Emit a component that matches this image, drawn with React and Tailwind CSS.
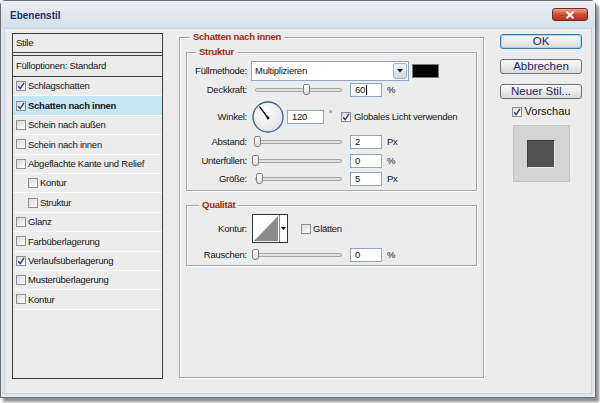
import React from "react"

const rows = [
    { label: "Schlagschatten", checked: true },
    { label: "Schatten nach innen", checked: true, selected: true },
    { label: "Schein nach außen" },
    { label: "Schein nach innen" },
    { label: "Abgeflachte Kante und Relief" },
    { label: "Kontur", indent: true },
    { label: "Struktur", indent: true },
    { label: "Glanz" },
    { label: "Farbüberlagerung" },
    { label: "Verlaufsüberlagerung", checked: true },
    { label: "Musterüberlagerung" },
    { label: "Kontur" },
]

function Check({ checked }) {
    return (
        <span className="flex h-[10px] w-[10px] shrink-0 items-center justify-center border border-[#8c8e90] bg-gradient-to-br from-[#d8d8d8] to-white">
            {checked && (
                <svg width="8" height="8" viewBox="0 0 8 8">
                    <path d="M1.2 4.2 L3.2 6.6 L7 0.8" fill="none" stroke="#23399a" strokeWidth="1.4" />
                </svg>
            )}
        </span>
    )
}

function Slider({ pos }) {
    return (
        <div className="relative ml-[5px] flex h-[12px] w-[90px] items-center">
            <div className="ml-[3px] h-[4px] flex-1 rounded-[2px] border border-[#a4a4a4] bg-[#e2e2e2]" />
            <div
                className="absolute top-0 h-[11px] w-[7px] rounded-t-[2px] rounded-b-[3px] border border-[#7f7f7f] bg-gradient-to-b from-white to-[#dcdcdc]"
                style={{ left: pos }}
            />
        </div>
    )
}

function NumField({ value, caret, className = "ml-[8px] w-[32px]" }) {
    return (
        <div className={`${className} flex h-[14px] items-center border border-[#8ea6c3] bg-white pl-[4px] text-[#111]`}>
            {value}
            {caret && <span className="ml-[1px] h-[10px] w-px bg-black" />}
        </div>
    )
}

function Label({ children }) {
    return <span className="w-[60px] shrink-0 text-right">{children}</span>
}

function SliderRow({ label, pos, value, unit, caret, className }) {
    return (
        <div className={`${className} flex h-[14px] items-center`}>
            <Label>{label}</Label>
            <Slider pos={pos} />
            <NumField value={value} caret={caret} />
            <span className="ml-[5px]">{unit}</span>
        </div>
    )
}

function GroupTitle({ children, className }) {
    return (
        <span className={`${className} -mt-[7px] block h-[12px] w-fit bg-[#ececec] px-[3px] font-bold leading-[12px] text-[#a3280e]`}>
            {children}
        </span>
    )
}

function Button({ children, primary }) {
    return (
        <button
            className={`flex h-[15px] w-[82px] items-center justify-center rounded-[3px] border bg-gradient-to-b from-[#f7f7f7] via-[#ececec] to-[#d9d9d9] text-[11.5px] leading-none tracking-normal text-[#1d1f6b] ${
                primary ? "border-[#3d7bad] shadow-[inset_0_0_0_1px_#9fd5f1]" : "border-[#707070]"
            }`}
        >
            {children}
        </button>
    )
}

export default function App() {
    return (
        <div className="h-[403px] w-[600px] bg-white font-['Liberation_Sans',Arial,sans-serif] text-[9.5px] leading-none tracking-[-0.25px] text-[#141414]">
            <div className="flex h-[398px] w-[596px] flex-col rounded-t-[5px] border border-[#6a6e74] bg-[#dfe7f0] shadow-[3px_4px_3px_rgba(0,0,0,0.45)]">
                {/* title bar */}
                <div className="flex h-[27px] shrink-0 items-start justify-between bg-gradient-to-b from-[#e9eff6] via-[#dfe8f2] to-[#d3dfeb]">
                    <span className="ml-[9px] mt-[10px] text-[10px] font-bold tracking-normal text-[#1b2f6b]">Ebenenstil</span>
                    <div className="mr-[7px] mt-[7px] flex h-[13px] w-[36px] items-center justify-center rounded-[3px] border border-[#7a2a20] bg-gradient-to-b from-[#e8a595] via-[#cf4a33] to-[#b8321f]">
                        <svg width="10" height="8" viewBox="0 0 10 8">
                            <path d="M1.5 0.8 L8.5 7.2 M8.5 0.8 L1.5 7.2" stroke="white" strokeWidth="2" />
                        </svg>
                    </div>
                </div>

                {/* body */}
                <div className="mx-[3px] mb-[3px] flex flex-1 items-start border border-[#c6d2de] bg-[#ececec] pl-[7px] pt-[4px]">
                    {/* style list */}
                    <div className="flex h-[346px] w-[151px] shrink-0 flex-col border border-[#3d3d3d]">
                        <div className="flex h-[19px] items-center border-b border-[#3d3d3d] pl-[3px]">Stile</div>
                        <div className="mt-[2px] flex h-[22px] items-center border-y border-[#3d3d3d] pl-[3px]">Fülloptionen: Standard</div>
                        {rows.map((r, i) => (
                            <div
                                key={i}
                                className={`flex h-[19.4px] items-center gap-[2px] border-b border-[#fbfbfb] ${
                                    r.indent ? "pl-[15px]" : "pl-[3px]"
                                } ${r.selected ? "bg-[#c7e6f5] font-bold" : ""}`}
                            >
                                <Check checked={r.checked} />
                                <span>{r.label}</span>
                            </div>
                        ))}
                    </div>

                    {/* main group */}
                    <div className="ml-[16px] mt-[4px] h-[341px] w-[305px] shrink-0 border border-[#a8a8a8] shadow-[inset_1px_1px_0_#fff,1px_1px_0_#fff]">
                        <GroupTitle className="ml-[10px]">Schatten nach innen</GroupTitle>

                        <div className="mx-[6px] mt-[9px] border border-[#a8a8a8] pb-[4px] shadow-[inset_1px_1px_0_#fff,1px_1px_0_#fff]">
                            <GroupTitle className="ml-[9px]">Struktur</GroupTitle>

                            <div className="mt-[3px] flex h-[20px] items-center">
                                <Label>Füllmethode:</Label>
                                <div className="ml-[4px] flex h-[20px] w-[158px] items-center border border-[#8ea6c3] bg-white pl-[3px]">
                                    <span className="flex-1">Multiplizieren</span>
                                    <div className="mr-px flex h-[16px] w-[14px] items-center justify-center rounded-[2px] border border-[#a5b4c6] bg-gradient-to-b from-[#f2f5f9] to-[#cfd8e2]">
                                        <svg width="6" height="4" viewBox="0 0 6 4">
                                            <path d="M0 0 H6 L3 3.5 Z" fill="#1a1a1a" />
                                        </svg>
                                    </div>
                                </div>
                                <div className="ml-[3px] h-[14px] w-[27px] border border-[#7c7c7c] bg-black" />
                            </div>

                            <SliderRow className="mt-[2px]" label="Deckkraft:" pos={51} value="60" unit="%" caret />

                            <div className="mt-[4px] flex h-[32px] items-center">
                                <Label>Winkel:</Label>
                                <svg className="ml-[5px] shrink-0" width="32" height="32" viewBox="0 0 32 32">
                                    <defs>
                                        <radialGradient id="dial" cx="40%" cy="35%" r="70%">
                                            <stop offset="0%" stopColor="#ffffff" />
                                            <stop offset="100%" stopColor="#e2e2e2" />
                                        </radialGradient>
                                    </defs>
                                    <circle cx="16" cy="16" r="15" fill="url(#dial)" stroke="#3f5f8f" strokeWidth="1.3" />
                                    <path d="M16 17 L7.5 5.5" stroke="#111" strokeWidth="1.3" />
                                    <circle cx="16" cy="17" r="1.4" fill="#111" />
                                </svg>
                                <NumField value="120" className="ml-[3px] w-[37px]" />
                                <span className="ml-[5px] self-start pt-[9px] text-[8px]">°</span>
                                <div className="ml-[9px] flex items-center gap-[3px]">
                                    <Check checked />
                                    <span>Globales Licht verwenden</span>
                                </div>
                            </div>

                            <SliderRow className="mt-[2px]" label="Abstand:" pos={2} value="2" unit="Px" />
                            <SliderRow className="mt-[5px]" label="Unterfüllen:" pos={0} value="0" unit="%" />
                            <SliderRow className="mt-[4px]" label="Größe:" pos={4} value="5" unit="Px" />
                        </div>

                        <div className="mx-[6px] mt-[14px] border border-[#a8a8a8] pb-[3px] shadow-[inset_1px_1px_0_#fff,1px_1px_0_#fff]">
                            <GroupTitle className="ml-[12px]">Qualität</GroupTitle>

                            <div className="mt-[3px] flex h-[29px] items-center">
                                <Label>Kontur:</Label>
                                <div className="ml-[5px] flex h-[29px] w-[36px] border border-[#333]">
                                    <svg width="26" height="27" viewBox="0 0 26 27" className="bg-white">
                                        <path d="M1 26 L25 1 L25 26 Z" fill="#8b8b8b" />
                                    </svg>
                                    <div className="flex flex-1 items-center justify-center border-l border-[#8a8a8a] bg-white">
                                        <svg width="5" height="3" viewBox="0 0 5 3">
                                            <path d="M0 0 H5 L2.5 3 Z" fill="#111" />
                                        </svg>
                                    </div>
                                </div>
                                <div className="ml-[13px] flex items-center gap-[2px]">
                                    <Check />
                                    <span>Glätten</span>
                                </div>
                            </div>

                            <SliderRow className="mt-[5px]" label="Rauschen:" pos={0} value="0" unit="%" />
                        </div>
                    </div>

                    {/* right column */}
                    <div className="ml-[16px] mt-[1px] flex w-[82px] shrink-0 flex-col items-center">
                        <Button primary>OK</Button>
                        <div className="mt-[10px]">
                            <Button>Abbrechen</Button>
                        </div>
                        <div className="mt-[10px]">
                            <Button>Neuer Stil...</Button>
                        </div>
                        <div className="mt-[7px] flex h-[11px] items-center gap-[3px] text-[11px] tracking-normal">
                            <Check checked />
                            <span>Vorschau</span>
                        </div>
                        <div className="mt-[8px] flex h-[57px] w-[57px] items-center justify-center border border-[#c2c2c2] bg-[#d4d4d4]">
                            <div className="h-[28px] w-[28px] border border-[#3e3e3e] border-b-[#f0f0f0] border-r-[#e6e6e6] bg-[#535353]" />
                        </div>
                    </div>
                </div>
            </div>
        </div>
    )
}
